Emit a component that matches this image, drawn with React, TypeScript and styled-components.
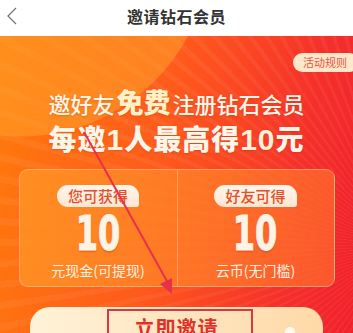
import styled, { createGlobalStyle } from "styled-components";

const GlobalStyle = createGlobalStyle`
  html, body {
    margin: 0;
    padding: 0;
    width: 353px;
    height: 333px;
    overflow: hidden;
    font-family: "Noto Sans CJK SC", "Noto Sans", sans-serif;
  }
`;

const Page = styled.div`
  position: relative;
  width: 353px;
  height: 333px;
  display: flex;
  flex-direction: column;
  overflow: hidden;
`;

const Header = styled.div`
  height: 36px;
  flex-shrink: 0;
  background: #ffffff;
  display: flex;
  align-items: center;
  justify-content: center;
  position: relative;
`;

const BackButton = styled.div`
  position: absolute;
  left: 6px;
  top: 7px;
  width: 12px;
  height: 18px;
  display: flex;
`;

const Title = styled.span`
  font-size: 16px;
  font-weight: 700;
  color: #333333;
  letter-spacing: 0.5px;
  margin-top: -4px;
`;

const Banner = styled.div`
  position: relative;
  flex: 1;
  display: flex;
  flex-direction: column;
  align-items: center;
  background:
    radial-gradient(circle at 20px -90px, rgba(255, 160, 40, 0.55) 0 190px, transparent 191px),
    repeating-conic-gradient(from 0deg at 400px 210px, rgba(255, 255, 255, 0.05) 0 1deg, transparent 1deg 3deg),
    linear-gradient(100deg, #ff7a0c 0%, #ff5a1c 45%, #f5302a 80%, #f0202c 100%);
`;

const RuleTag = styled.div`
  position: absolute;
  right: -6px;
  top: 17px;
  height: 19px;
  padding: 0 12px 0 10px;
  border-radius: 10px;
  background: #ffe7cc;
  color: #e8553a;
  font-size: 11px;
  line-height: 19px;
`;

const Headline = styled.div`
  margin-top: 52px;
  display: flex;
  align-items: baseline;
  color: #fff6ea;
  font-size: 22px;
  font-weight: 500;
  line-height: 28px;
  text-shadow: 0 1px 2px rgba(180, 40, 0, 0.3);
`;

const Highlight = styled.span`
  font-size: 27px;
  font-weight: 900;
  color: #fff2c8;
  margin: 0 2px;
`;

const SubHeadline = styled.div`
  margin-top: 5px;
  color: #fff6ea;
  font-size: 28px;
  font-weight: 900;
  line-height: 32px;
  letter-spacing: 1px;
  text-shadow: 0 1px 2px rgba(180, 40, 0, 0.3);
`;

const Num = styled.span`
  font-family: "Liberation Sans", sans-serif;
  font-weight: 700;
  font-size: 30px;
  color: #fff1dc;
`;

const Cards = styled.div`
  margin-top: 13px;
  width: 316px;
  height: 118px;
  display: grid;
  grid-template-columns: 1fr 1fr;
  border-radius: 9px;
  border: 1px solid rgba(255, 210, 170, 0.5);
  background: linear-gradient(100deg, rgba(255, 145, 35, 0.92), rgba(255, 105, 45, 0.7));
  box-sizing: border-box;
  overflow: hidden;
`;

const Card = styled.div<{ $divider?: boolean }>`
  display: flex;
  flex-direction: column;
  align-items: center;
  padding-top: 15px;
  ${(p) => (p.$divider ? "border-left: 1px solid rgba(255, 210, 170, 0.4);" : "")}
`;

const Label = styled.div`
  height: 22px;
  padding: 0 11px;
  border-radius: 11px 11px 3px 11px;
  background: linear-gradient(#fff6ec, #ffe6d2);
  color: #e4502c;
  font-size: 15px;
  line-height: 22px;
  font-weight: 500;
`;

const Amount = styled.div`
  margin-top: 3px;
  font-family: "DejaVu Sans Condensed", "Liberation Sans", sans-serif;
  font-weight: 700;
  font-size: 48px;
  line-height: 46px;
  color: #fff3e6;
  transform: scaleX(0.74);
  -webkit-text-stroke: 1px #fff3e6;
  text-shadow: 0 2px 2px rgba(170, 50, 0, 0.35);
`;

const Caption = styled.div`
  margin-top: 4px;
  font-size: 14px;
  color: #fff0e2;
`;

const InviteButton = styled.div`
  position: relative;
  margin-top: 20px;
  width: 293px;
  height: 44px;
  flex-shrink: 0;
  border-radius: 20px;
  background: linear-gradient(90deg, #fff2d8, #ffd9a8);
  display: flex;
  justify-content: center;
  padding-top: 6px;
  box-sizing: border-box;
  color: #e0302a;
  font-size: 20px;
  font-weight: 700;
  letter-spacing: 1px;
`;

const Sparkle = styled.span`
  position: absolute;
  right: 28px;
  top: 20px;
  width: 10px;
  height: 8px;
  border-radius: 5px 5px 0 0;
  background: rgba(255, 255, 255, 0.85);
`;

const MarkBox = styled.div`
  position: absolute;
  left: 107px;
  top: 273px;
  width: 146px;
  height: 40px;
  border: 2px solid #d8383f;
  box-sizing: border-box;
`;

const ArrowLayer = styled.svg`
  position: absolute;
  left: 0;
  top: 0;
  pointer-events: none;
`;

export default function App() {
  return (
    <>
      <GlobalStyle />
      <Page>
        <Header>
          <BackButton>
            <svg width="12" height="18" viewBox="0 0 12 18">
              <path d="M10 1 L2 9 L10 17" fill="none" stroke="#777" strokeWidth="1.3" />
            </svg>
          </BackButton>
          <Title>邀请钻石会员</Title>
        </Header>
        <Banner>
          <RuleTag>活动规则</RuleTag>
          <Headline>
            邀好友<Highlight>免费</Highlight>注册钻石会员
          </Headline>
          <SubHeadline>
            每邀<Num>1</Num>人最高得<Num>10</Num>元
          </SubHeadline>
          <Cards>
            <Card>
              <Label>您可获得</Label>
              <Amount>10</Amount>
              <Caption>元现金(可提现)</Caption>
            </Card>
            <Card $divider>
              <Label>好友可得</Label>
              <Amount>10</Amount>
              <Caption>云币(无门槛)</Caption>
            </Card>
          </Cards>
          <InviteButton>
            立即邀请
            <Sparkle />
          </InviteButton>
          <MarkBox />
        </Banner>
        <ArrowLayer width="353" height="333" viewBox="0 0 353 333">
          <line x1="84" y1="132" x2="168" y2="283" stroke="#e8304a" strokeWidth="2" />
          <path d="M160 284 L172 294 L172 278 Z" fill="#e8304a" />
        </ArrowLayer>
      </Page>
    </>
  );
}
